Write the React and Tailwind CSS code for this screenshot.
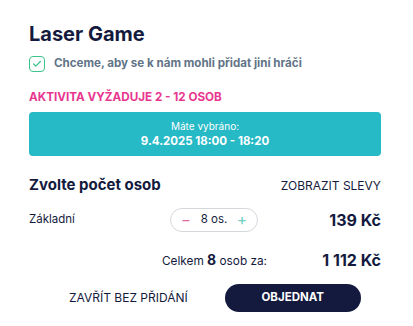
import { Check } from 'lucide-react'

export default function App() {
  return (
    <div className="w-[413px] h-[326px] bg-white font-['Inter',sans-serif] text-[#141a3d] pl-[29px] pr-[32px] pt-[22px]">
      <h1 className="text-[20px] font-bold leading-[24px]">Laser Game</h1>

      <label className="mt-[9px] flex items-center gap-[9px]">
        <span className="w-[16px] h-[16px] rounded-[4px] border border-[#3cc48a] flex items-center justify-center">
          <Check className="w-[10px] h-[10px] text-[#3cc48a]" strokeWidth={3} />
        </span>
        <span className="text-[11.6px] font-bold text-[#627487]">Chceme, aby se k nám mohli přidat jiní hráči</span>
      </label>

      <p className="mt-[18px] text-[11.7px] font-bold text-[#e8368f] leading-[14px]">AKTIVITA VYŽADUJE 2 - 12 OSOB</p>

      <div className="mt-[8px] h-[44px] rounded-[4px] bg-[#26b9c6] text-white flex flex-col items-center justify-center">
        <span className="text-[10px] leading-[13px]">Máte vybráno:</span>
        <span className="text-[11.5px] font-bold leading-[16px]">9.4.2025 18:00 - 18:20</span>
      </div>

      <div className="mt-[18px] flex items-center justify-between">
        <h2 className="text-[15px] font-bold">Zvolte počet osob</h2>
        <span className="text-[12px]">ZOBRAZIT SLEVY</span>
      </div>

      <div className="mt-[11px] grid grid-cols-[141px_88px_1fr] items-center">
        <span className="text-[11.5px]">Základní</span>
        <div className="h-[24px] rounded-full border border-[#d4d8dc] flex items-center justify-between px-[10px]">
          <span className="text-[#e36aa5] text-[15px] leading-none">−</span>
          <span className="text-[11.5px]">8 os.</span>
          <span className="text-[#6ccfbf] text-[15px] leading-none">+</span>
        </div>
        <span className="text-right text-[16px] font-bold">139 Kč</span>
      </div>

      <div className="mt-[16px] flex items-center justify-end">
        <span className="text-[11.8px]">Celkem <b className="text-[14px]">8</b> osob za:</span>
        <span className="w-[114px] text-right text-[16px] font-bold">1 112 Kč</span>
      </div>

      <div className="mt-[12px] flex items-center">
        <button className="ml-[40px] text-[12px]">ZAVŘÍT BEZ PŘIDÁNÍ</button>
        <button className="ml-[37px] w-[136px] h-[28px] rounded-full bg-[#141a3d] text-white text-[11.5px] font-bold">OBJEDNAT</button>
      </div>
    </div>
  )
}
